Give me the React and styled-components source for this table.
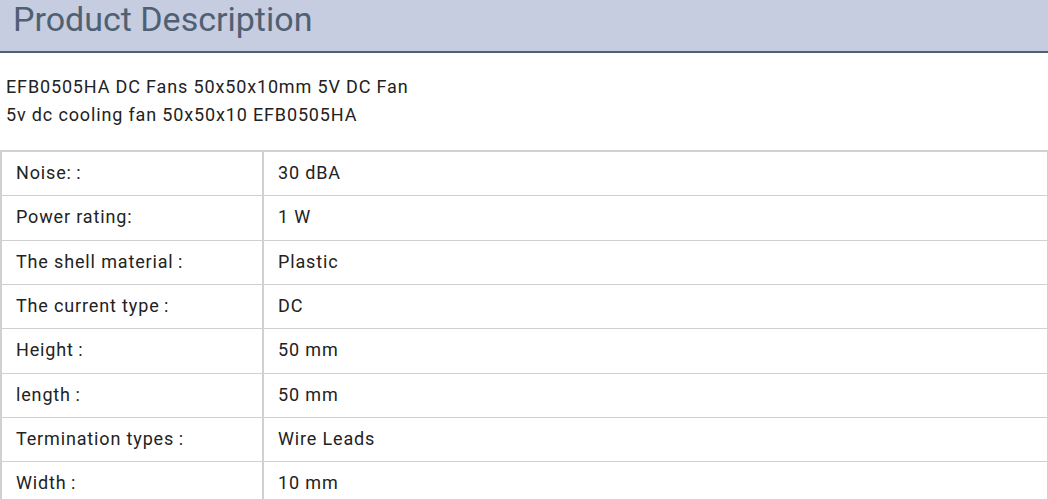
import React from "react";
import styled, { createGlobalStyle } from "styled-components";

const GlobalStyle = createGlobalStyle`
  body {
    margin: 0;
    background: #fff;
    font-family: Roboto, "Liberation Sans", sans-serif;
  }
`;

const Page = styled.div`
  width: 1048px;
  overflow: hidden;
`;

const Header = styled.div`
  height: 49px;
  padding: 2px 0 0 13px;
  background: #c6cde0;
  border-bottom: 2px solid #4f5f75;
`;

const Title = styled.h2`
  margin: 0;
  font-size: 34px;
  line-height: 1;
  font-weight: 400;
  color: #4f6073;
`;

const Desc = styled.div`
  padding: 20px 6px 0;
  font-size: 18px;
  letter-spacing: 0.85px;
  line-height: 27.5px;
  color: #222;
`;

const Table = styled.table`
  margin-top: 22px;
  width: 100%;
  border-collapse: collapse;
  border-top: 2px solid #d0d0d0;
  border-left: 2px solid #d0d0d0;
  font-size: 18px;
  letter-spacing: 0.85px;
  color: #222;
`;

const Cell = styled.td`
  height: 41.33px;
  padding: 0 14px 2px;
  border-bottom: 1px solid #d0d0d0;
  border-right: ${(p) => (p.first ? "2px" : "1px")} solid #d0d0d0;
  width: ${(p) => (p.first ? "232px" : "auto")};
  vertical-align: middle;
`;

const specs = [
  ["Noise:\u2009:", "30 dBA"],
  ["Power rating:", "1 W"],
  ["The shell material\u2009:", "Plastic"],
  ["The current type\u2009:", "DC"],
  ["Height\u2009:", "50 mm"],
  ["length\u2009:", "50 mm"],
  ["Termination types\u2009:", "Wire Leads"],
  ["Width\u2009:", "10 mm"],
];

const App = () => (
  <>
    <GlobalStyle />
    <Page>
      <Header>
        <Title>Product Description</Title>
      </Header>
      <Desc>
        EFB0505HA DC Fans 50x50x10mm 5V DC Fan
        <br />
        5v dc cooling fan 50x50x10 EFB0505HA
      </Desc>
      <Table>
        <tbody>
          {specs.map(([k, v]) => (
            <tr key={k}>
              <Cell first>{k}</Cell>
              <Cell>{v}</Cell>
            </tr>
          ))}
        </tbody>
      </Table>
    </Page>
  </>
);

export default App;
